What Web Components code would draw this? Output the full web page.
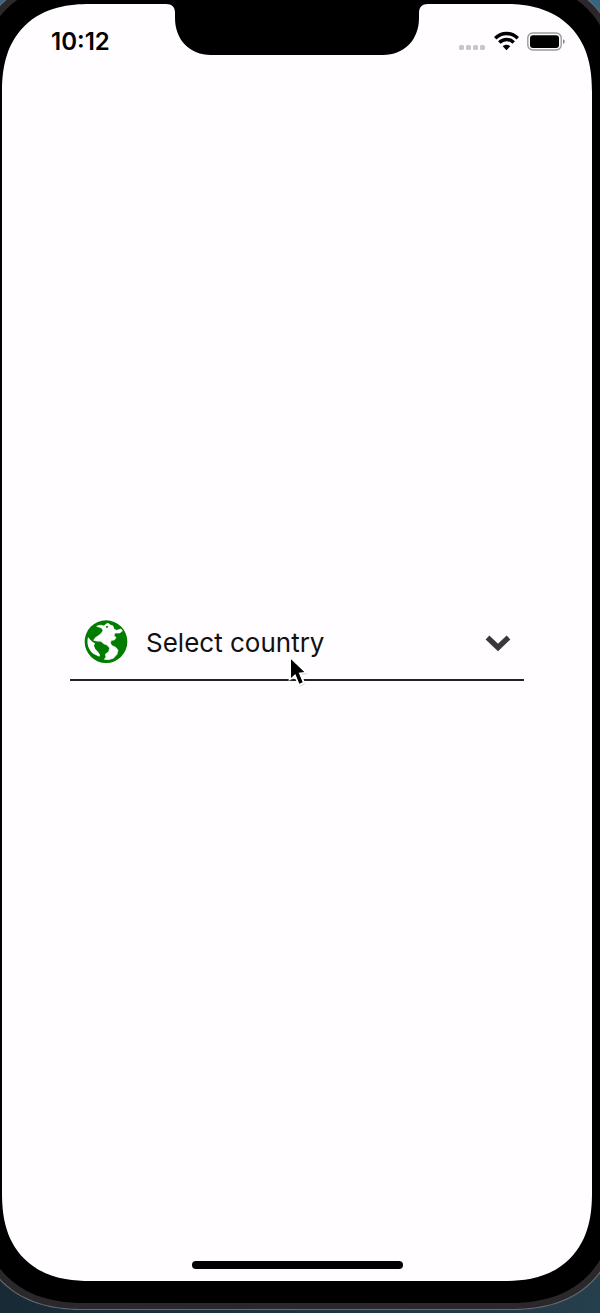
<!DOCTYPE html>
<html lang="en">
<head>
<meta charset="utf-8">
<meta name="viewport" content="width=device-width, initial-scale=1">
<title>Select country</title>
<style>
  html { height: 100%; }
  body {
    margin: 0;
    min-height: 100%;
    display: grid;
    overflow: hidden;
    background: linear-gradient(to right, #172a36, #263f4d) bottom / 100% 50% no-repeat, #356580;
    font-family: Inter, "Liberation Sans", sans-serif;
    color: #111;
  }
</style>
</head>
<body>
<phone-frame>
  <status-bar slot="status" time="10:12"></status-bar>
  <country-field label="Select country"></country-field>
  <home-indicator slot="home"></home-indicator>
</phone-frame>

<script>
const define = (name, html, setup) => {
  const template = document.createElement('template');
  template.innerHTML = html;
  customElements.define(name, class extends HTMLElement {
    constructor() {
      super();
      this.attachShadow({ mode: 'open' }).append(template.content.cloneNode(true));
    }
    connectedCallback() { if (setup) setup(this, this.shadowRoot); }
  });
};

define('phone-frame', `
  <style>
    :host {
      display: grid;
      box-sizing: border-box;
      margin: -25px -21px 3px -27px;
      border: 1px solid #6c6c6e;
      border-radius: 100px;
      padding: 6px;
      background: #2a282a;
    }
    .bezel { display: grid; padding: 22px; border-radius: 92px; background: #000; }
    .screen {
      display: grid;
      grid-template-rows: 1fr auto 1fr;
      border-radius: 76px;
      background: #fffdff;
    }
    @supports (corner-shape: superellipse(1.25)) {
      :host { border-radius: 112px; corner-shape: superellipse(1.25); }
      .bezel { border-radius: 106px; corner-shape: superellipse(1.25); }
      .screen { border-radius: 88px; corner-shape: superellipse(1.25); }
    }
    main { padding: 0 68px; }
    footer { display: grid; align-items: end; }
  </style>
  <div class="bezel">
    <div class="screen">
      <slot name="status"></slot>
      <main><slot></slot></main>
      <footer><slot name="home"></slot></footer>
    </div>
  </div>`);

define('status-bar', `
  <style>
    :host {
      display: grid;
      grid-template-columns: 1fr auto 1fr;
      align-items: start;
    }
    time { padding: 24px 0 0 49px; font-size: 24px; line-height: 28px; font-weight: 600; color: #000; }
    svg { display: block; }
    .icons { display: flex; align-items: center; justify-content: end; gap: 8px; padding: 27px 27px 0 0; }
  </style>
  <time></time>
  <svg width="262" height="52" viewBox="0 0 262 52" aria-hidden="true">
    <path d="M0 0H262C256 0 253 3 253 9V14C253 36 238 51 217 51H45C24 51 9 36 9 14V9C9 3 6 0 0 0Z"/>
  </svg>
  <div class="icons">
    <svg width="27" height="21" viewBox="0 0 27 21" role="img" aria-label="No signal" fill="#c8c6c9">
      <rect x="0" y="14" width="5" height="5" rx="1.6"/><rect x="7" y="14" width="5" height="5" rx="1.6"/>
      <rect x="14" y="14" width="5" height="5" rx="1.6"/><rect x="21" y="14" width="5" height="5" rx="1.6"/>
    </svg>
    <svg width="25" height="21" viewBox="0 0 25 21" role="img" aria-label="Wi-Fi">
      <g fill="none" stroke="#000" stroke-width="3.6">
        <path d="M1.2 7.3C7.700 .8 17.300 .8 23.800 7.3"/>
        <path d="M5.3 11.500C9.500 7.400 15.500 7.400 19.700 11.500"/>
      </g>
      <path d="M8.700 15.200C11 13.200 14 13.200 16.300 15.200L12.500 19.200Z"/>
    </svg>
    <svg width="38" height="21" viewBox="0 0 38 21" role="img" aria-label="Battery full">
      <rect x=".8" y="2" width="33.4" height="17" rx="5" fill="none" stroke="#9b999c" stroke-width="1.4"/>
      <rect x="3" y="4.2" width="29" height="12.8" rx="3"/>
      <path d="M36 8.2C38.4 9 38.4 12.2 36 13Z" fill="#8b898c"/>
    </svg>
  </div>`, (el, root) => {
    root.querySelector('time').textContent = el.getAttribute('time');
  });

define('country-field', `
  <style>
    :host { display: block; position: relative; }
    label {
      display: grid;
      grid-template-columns: 44px 1fr;
      gap: 18px;
      align-items: center;
      height: 75px;
      padding: 0 0 0 14px;
      border-bottom: 2px solid #222;
    }
    .box { display: grid; grid-template-columns: 1fr 28px 12px; align-items: center; padding-top: 2px; }
    svg { display: block; }
    select {
      grid-area: 1 / 1 / 2 / 4;
      appearance: none;
      border: 0;
      margin: 0;
      padding: 0;
      width: 100%;
      height: 44px;
      background: none;
      color: #111;
      font: 400 26px/32px Inter, "Liberation Sans", sans-serif;
      outline: 0;
    }
    .chevron { grid-area: 1 / 2; pointer-events: none; }
    .pointer { position: absolute; left: 217px; top: 51px; pointer-events: none; }
  </style>
  <label>
    <svg width="44" height="44" viewBox="0 3 132 132" aria-hidden="true">
      <circle cx="66" cy="68" r="64" fill="#007c00"/>
      <path fill="#fffdff" stroke="#fffdff" stroke-width="2" stroke-linejoin="round" d="M38 22C46 17 54 19 60 21L66 15L72 13L79 18L87 21L90 31L98 34L111 30L115 36L107 42L93 42L90 49L96 56L91 63L82 64L79 72L84 80L94 84L102 93L99 106L88 118L73 122L61 121L66 114L64 106L74 98L77 87L69 78L59 74L51 67L38 66L29 64L34 56L43 50L51 44L57 35L53 27Z"/>
      <path fill="#fffdff" d="M12 54C7 75 14 94 29 105L46 113L48 107L42 98L34 90L30 80L33 73L26 69L19 62Z"/>
      <path fill="#007c00" d="M66 22L73 21L71 26L66 26Z"/>
    </svg>
    <span class="box">
      <select aria-label="Select country"><option></option></select>
      <svg class="chevron" width="28" height="20" viewBox="0 0 28 20" aria-hidden="true">
        <path d="M3.500 4.500L14 14.500L24.500 4.500" fill="none" stroke="#3b383c" stroke-width="5.400" stroke-linejoin="miter"/>
      </svg>
    </span>
  </label>
  <svg class="pointer" width="21" height="33" viewBox="260 135 63 99" aria-hidden="true">
    <path d="M268 139L320 188L302 191L313 218L297 226L284 198L268 211Z" fill="#777" opacity=".3" transform="translate(1 4)"/>
    <path d="M265 138L320 189L304 191L314 219L295 229L283 202L265 213Z" fill="#fff"/>
    <path d="M272 148L312 186L295 188L307 217L297 221L285 192L272 204Z"/>
  </svg>`, (el, root) => {
    root.querySelector('option').textContent = el.getAttribute('label');
  });

define('home-indicator', `
  <style>
    :host { display: grid; justify-content: center; padding-bottom: 12px; }
    div { width: 211px; height: 8px; border-radius: 4px; background: #000; }
  </style>
  <div></div>`);
</script>
</body>
</html>
